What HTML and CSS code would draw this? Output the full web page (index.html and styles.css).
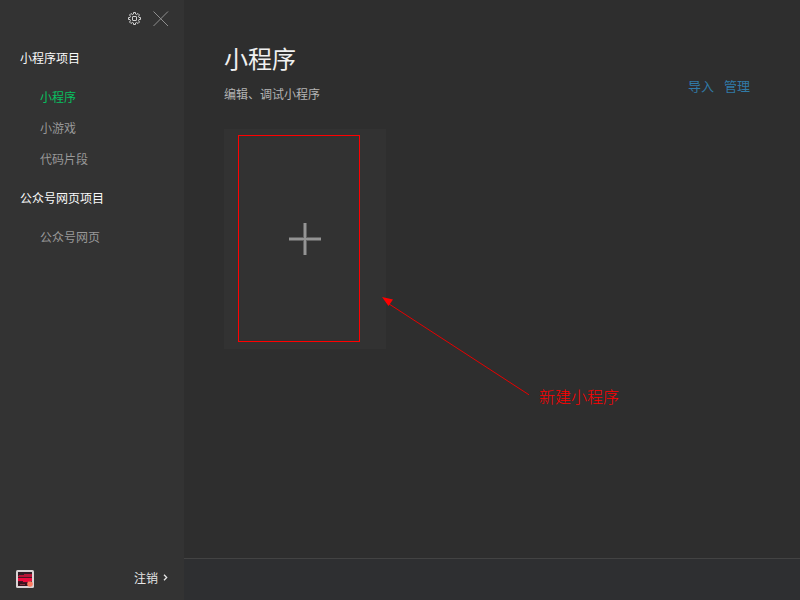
FILE: index.html
```html
<!DOCTYPE html>
<html lang="zh-CN">
<head>
<meta charset="utf-8">
<title>小程序</title>
<link rel="stylesheet" href="styles.css">
</head>
<body>
<div class="app">
  <aside class="sidebar">
    <div class="tools">
      <svg class="gear" width="13" height="13" viewBox="0 0 13 13" fill="none" stroke="#d2d2d2">
        <path d="M5.500 .5h2v1.500l1.200.5 1.300-1 1.500 1.500-1 1.300.5 1.200h1.500v2H11l-.5 1.200 1 1.300-1.500 1.500-1.300-1-1.200.5v1.500h-2V11l-1.200-.5-1.300 1L1.500 10l1-1.300L2 7.500H.5v-2H2l.5-1.200-1-1.300L3 1.500l1.300 1L5.500 2z"/>
        <rect x="4.500" y="4.500" width="4" height="4" rx=".5"/>
      </svg>
      <svg class="close" width="16" height="16" viewBox="0 0 16 16" fill="none" stroke="#8f8f8f"><path d="M.5 .5l14.500 14.500M15 .5L.5 15"/></svg>
    </div>
    <nav class="nav">
      <h2 class="group">小程序项目</h2>
      <ul class="items">
        <li class="active">小程序</li>
        <li>小游戏</li>
        <li>代码片段</li>
      </ul>
      <h2 class="group">公众号网页项目</h2>
      <ul class="items">
        <li>公众号网页</li>
      </ul>
    </nav>
    <div class="account">
      <svg class="avatar" width="18" height="18" viewBox="0 0 18 18">
        <rect width="18" height="18" rx="1.500" fill="#d9d3d4"/>
        <rect x="2" y="2" width="14" height="14" fill="#4b1424"/>
        <path d="M2 2h14v2H10v1H2z" fill="#301c25"/>
        <path d="M3 5h5V4h8v3H2V6h1z" fill="#b51436"/>
        <path d="M2 8h14v3h-3v1H7v-1H2z" fill="#ee0c3e"/>
        <path d="M2 12h4v1h5v3H2z" fill="#38131e"/>
        <path d="M4 14h5v1H4z" fill="#8b3340"/>
        <circle cx="14" cy="14" r="2.800" fill="#ff7b61"/>
      </svg>
      <span class="logout">注销<svg width="5" height="7" viewBox="0 0 5 7" fill="none" stroke="#e6e6e6" stroke-width="1.300"><path d="M1 .7l2.700 2.800L1 6.300"/></svg></span>
    </div>
  </aside>
  <main class="main">
    <section class="content">
      <header class="head">
        <div>
          <h1 class="title">小程序</h1>
          <p class="subtitle">编辑、调试小程序</p>
        </div>
        <div class="links"><a>导入</a><a>管理</a></div>
      </header>
      <div class="card">
        <svg width="32" height="32" viewBox="0 0 32 32"><path d="M14 0h4v14h14v4H18v14h-4V18H0v-4h14z" fill="#626262"/><path d="M15 0h2v15h15v2H17v15h-2V17H0v-2h15z" fill="#949494"/></svg>
        <div class="highlight"></div>
      </div>
    </section>
    <footer class="footer"></footer>
  </main>
  <svg class="arrow" width="150" height="102" viewBox="0 0 150 102">
    <path d="M6 5L149 97.800" stroke="#e60000" stroke-width="1" fill="none"/>
    <path d="M2 0L13 2.500 8.500 9z" fill="#f00"/>
  </svg>
  <span class="note">新建小程序</span>
</div>
</body>
</html>
```
FILE: styles.css
```css
* { box-sizing: border-box; }
body, h1, h2, p, ul { margin: 0; padding: 0; }
body { font-family: "Noto Sans CJK SC", sans-serif; font-size: 12px; overflow: hidden; }
ul { list-style: none; }
svg { display: block; flex: none; }

.app { position: relative; display: flex; width: 800px; height: 600px; background: #2e2e2e; }

.sidebar { display: flex; flex-direction: column; width: 184px; background: #333; }
.tools { display: flex; justify-content: flex-end; align-items: flex-start; gap: 12px; height: 37px; padding: 11px 15px 0 0; }
.gear { margin-top: 1px; }
.nav { flex: 1; padding-top: 5px; }
.group { padding-left: 20px; font-size: 12px; font-weight: 400; line-height: 31px; color: #fafafa; }
.items { padding: 8px 0 8px 40px; line-height: 31px; color: #999; }
.active { color: #07c160; }
.account { display: flex; justify-content: space-between; align-items: center; height: 42px; padding: 0 16px; }
.logout { display: flex; align-items: center; gap: 5px; padding-bottom: 3px; color: #e6e6e6; }

.main { display: flex; flex-direction: column; flex: 1; }
.content { flex: 1; padding: 40px 50px 0 40px; }
.head { display: flex; justify-content: space-between; height: 89px; }
.title { font-size: 24px; font-weight: 400; line-height: 36px; color: #f0f0f0; }
.subtitle { margin-top: 9px; line-height: 18px; color: #b4b4b4; }
.links { display: flex; gap: 10px; padding-top: 36px; font-size: 13px; line-height: 20px; color: #317ba7; }
.card { position: relative; display: flex; align-items: center; justify-content: center; width: 162px; height: 220px; background: #323232; }
.highlight { position: absolute; left: 14px; top: 6px; width: 122px; height: 207px; border: 1px solid #f00; }
.footer { height: 42px; border-top: 1px solid #434343; background: #2e2f31; }

.arrow { position: absolute; left: 380px; top: 297px; }
.note { position: absolute; left: 539px; top: 384px; font-size: 16px; font-weight: 300; line-height: 24px; color: #f00; white-space: nowrap; }
```
